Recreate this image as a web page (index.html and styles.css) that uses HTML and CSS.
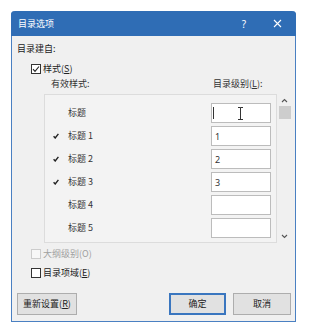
FILE: index.html
```html
<!DOCTYPE html>
<html lang="zh">
<head>
<meta charset="utf-8">
<link rel="stylesheet" href="styles.css">
</head>
<body>
<div class="dialog">
  <div class="titlebar">
    <span class="title">目录选项</span>
    <span class="help">?</span>
    <span class="close"><svg width="9" height="9" viewBox="0 0 9 9"><path d="M1 1L8 8M8 1L1 8" stroke="#fff" stroke-width="1.1" fill="none"/></svg></span>
  </div>
  <div class="content">
    <div class="from">目录建自:</div>
    <div class="check-row styles-row">
      <span class="cb"><svg width="8" height="8" viewBox="0 0 8 8"><path d="M1 4.2L3 6.3L7 1.5" stroke="#222" stroke-width="1.1" fill="none"/></svg></span>
      <span>样式(<u>S</u>)</span>
    </div>
    <div class="list-head">
      <span class="h-styles">有效样式:</span>
      <span>目录级别(<u>L</u>):</span>
    </div>
    <div class="list-wrap">
      <div class="list">
        <div class="row"><span class="tick"></span><span class="name">标题</span><span class="level"><span class="caret"></span><svg class="ibeam" width="7" height="13" viewBox="0 0 7 13"><path d="M1 0.5H3.5M3.5 0.5H6M3.5 0.5V12.5M1 12.5H6" stroke="#333" stroke-width="1" fill="none"/></svg></span></div>
        <div class="row"><span class="tick"><svg width="6" height="6" viewBox="0 0 6 6"><path d="M0.6 3.3L2.2 5L5.4 0.8" stroke="#222" stroke-width="1.4" fill="none"/></svg></span><span class="name">标题 1</span><span class="level">1</span></div>
        <div class="row"><span class="tick"><svg width="6" height="6" viewBox="0 0 6 6"><path d="M0.6 3.3L2.2 5L5.4 0.8" stroke="#222" stroke-width="1.4" fill="none"/></svg></span><span class="name">标题 2</span><span class="level">2</span></div>
        <div class="row"><span class="tick"><svg width="6" height="6" viewBox="0 0 6 6"><path d="M0.6 3.3L2.2 5L5.4 0.8" stroke="#222" stroke-width="1.4" fill="none"/></svg></span><span class="name">标题 3</span><span class="level">3</span></div>
        <div class="row"><span class="tick"></span><span class="name">标题 4</span><span class="level"></span></div>
        <div class="row"><span class="tick"></span><span class="name">标题 5</span><span class="level"></span></div>
      </div>
      <div class="scrollbar">
        <svg class="arrow" width="7" height="5" viewBox="0 0 7 5"><path d="M1 4L3.5 1.5L6 4" stroke="#555" stroke-width="1.1" fill="none"/></svg>
        <span class="thumb"></span>
        <span class="track"></span>
        <svg class="arrow" width="7" height="5" viewBox="0 0 7 5"><path d="M1 1L3.5 3.5L6 1" stroke="#555" stroke-width="1.1" fill="none"/></svg>
      </div>
    </div>
    <div class="check-row outline-row disabled">
      <span class="cb"></span>
      <span>大纲级别(O)</span>
    </div>
    <div class="check-row fields-row">
      <span class="cb"></span>
      <span>目录项域(<u>E</u>)</span>
    </div>
    <div class="buttons">
      <button class="btn reset">重新设置(<u>R</u>)</button>
      <span class="spacer"></span>
      <button class="btn ok">确定</button>
      <button class="btn cancel">取消</button>
    </div>
  </div>
</div>
</body>
</html>
```

FILE: styles.css
```css
* { box-sizing: border-box; }
html, body { margin: 0; padding: 0; background: #fff; }
body {
  padding: 11px 0 0 11px;
  font-family: "Noto Sans CJK SC", "Noto Sans", sans-serif;
  font-size: 9px;
  color: #222;
}
u { text-decoration: underline; text-underline-offset: 1px; }

.dialog {
  width: 285px;
  height: 311px;
  background: #f0f0f0;
  border: 1px solid #4a80c2;
  border-top: none;
  border-radius: 4px 4px 0 0;
  display: flex;
  flex-direction: column;
}

.titlebar {
  height: 25px;
  margin: 0 -1px;
  background: #2f6db5;
  border-radius: 4px 4px 0 0;
  display: flex;
  align-items: center;
  color: #fff;
  padding-left: 7px;
}
.title { flex: 1; font-size: 9px; line-height: 12px; }
.help { width: 10px; font-size: 10px; font-family: "Noto Sans", sans-serif; margin-right: 24px; text-align: center; }
.close { width: 9px; height: 9px; display: flex; margin-right: 14px; }

.content {
  flex: 1;
  display: flex;
  flex-direction: column;
  padding: 0 4px 0 5px;
}

.from { margin-top: 7px; height: 12px; line-height: 12px; }

.check-row {
  display: flex;
  align-items: center;
  height: 10px;
  margin-left: 14px;
  line-height: 12px;
}
.styles-row { margin-top: 9px; }
.outline-row { margin-top: 6px; }
.fields-row { margin-top: 9px; }
.cb {
  width: 10px;
  height: 10px;
  border: 1px solid #333;
  background: #fff;
  margin-right: 2px;
  display: flex;
  align-items: center;
  justify-content: center;
}
.disabled { color: #a0a0a0; }
.disabled .cb { border-color: #cccccc; background: #f7f7f7; }

.list-head {
  margin-top: 4px;
  height: 12px;
  line-height: 12px;
  display: flex;
  color: #333;
}
.h-styles { margin-left: 34px; width: 162px; }

.list-wrap {
  margin-top: 4px;
  margin-left: 27px;
  height: 149px;
  display: flex;
}
.list {
  width: 234px;
  height: 149px;
  border: 1px solid #dcdcdc;
  background: #f3f3f3;
  overflow: hidden;
  padding: 8px 5px 0 8px;
  display: flex;
  flex-direction: column;
  gap: 3px;
}
.row {
  flex: none;
  height: 20px;
  display: flex;
  align-items: center;
  color: #333;
}
.tick { width: 15px; height: 6px; display: flex; align-items: center; }
.name { flex: 1; line-height: 12px; }
.level {
  position: relative;
  width: 60px;
  height: 20px;
  background: #fff;
  border: 1px solid #bcbcbc;
  display: flex;
  align-items: center;
  padding-left: 3px;
  font-family: "Noto Sans", sans-serif;
  font-size: 9px;
  color: #333;
}
.caret { width: 1px; height: 12px; background: #333; margin-left: -2px; }
.ibeam { position: absolute; left: 25px; top: 3px; }

.scrollbar {
  width: 14px;
  height: 149px;
  display: flex;
  flex-direction: column;
  align-items: center;
  padding-top: 4px;
  padding-bottom: 4px;
}
.arrow { flex: none; }
.thumb { width: 12px; height: 13px; background: #cdcdcd; margin-top: 3px; margin-left: 1px; }
.track { flex: 1; }

.buttons {
  margin-top: 15px;
  height: 22px;
  display: flex;
}
.spacer { flex: 1; }
.btn {
  font-family: "Noto Sans CJK SC", sans-serif;
  font-size: 9px;
  color: #222;
  height: 22px;
  padding: 0;
  background: #e1e1e1;
  border: 1px solid #adadad;
  line-height: 12px;
}
.reset { width: 60px; }
.ok { width: 57px; border: 2px solid #3a76bf; margin-right: 7px; }
.cancel { width: 58px; }
```
